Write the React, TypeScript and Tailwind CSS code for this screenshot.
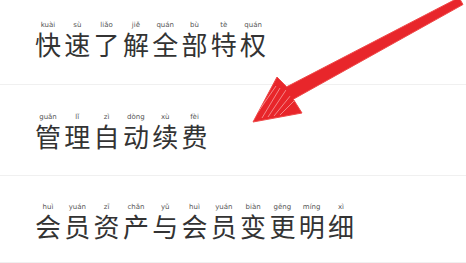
import React from "react";

type Char = { c: string; p: string };

const rows: { items: Char[]; cls: string }[] = [
  {
    cls: "h-[85px] pt-[21px]",
    items: [
      { c: "快", p: "kuài" },
      { c: "速", p: "sù" },
      { c: "了", p: "liǎo" },
      { c: "解", p: "jiě" },
      { c: "全", p: "quán" },
      { c: "部", p: "bù" },
      { c: "特", p: "tè" },
      { c: "权", p: "quán" },
    ],
  },
  {
    cls: "h-[91px] pt-[28px]",
    items: [
      { c: "管", p: "guǎn" },
      { c: "理", p: "lǐ" },
      { c: "自", p: "zì" },
      { c: "动", p: "dòng" },
      { c: "续", p: "xù" },
      { c: "费", p: "fèi" },
    ],
  },
  {
    cls: "h-[87px] pt-[27px]",
    items: [
      { c: "会", p: "huì" },
      { c: "员", p: "yuán" },
      { c: "资", p: "zī" },
      { c: "产", p: "chǎn" },
      { c: "与", p: "yǔ" },
      { c: "会", p: "huì" },
      { c: "员", p: "yuán" },
      { c: "变", p: "biàn" },
      { c: "更", p: "gēng" },
      { c: "明", p: "míng" },
      { c: "细", p: "xì" },
    ],
  },
];

const Arrow = () => (
  <svg
    className="absolute inset-0 pointer-events-none"
    width="466"
    height="263"
    viewBox="0 0 466 263"
  >
    <defs>
      <clipPath id="head">
        <polygon points="277,77 253,122 302,113" />
      </clipPath>
    </defs>
    <polygon
      points="459,-2.5 286.7,86.8 277,77 253,122 302,113 293.3,99.2 463,4.5"
      fill="#e8262b"
      stroke="#ef4a4a"
      strokeWidth="1"
      strokeLinejoin="round"
    />
    <g clipPath="url(#head)" stroke="#ffffff" strokeWidth="0.8" opacity="0.55">
      <line x1="262" y1="118" x2="280" y2="88" />
      <line x1="268" y1="117" x2="286" y2="90" />
      <line x1="274" y1="116" x2="291" y2="95" />
      <line x1="280" y1="115" x2="295" y2="100" />
      <line x1="258" y1="112" x2="276" y2="86" />
    </g>
  </svg>
);

export default function App() {
  return (
    <div className="relative w-[466px] h-[263px] overflow-hidden bg-white font-['Noto_Sans_CJK_SC','Noto_Sans',sans-serif]">
      {rows.map((row, i) => (
        <div
          key={i}
          className={`${row.cls} box-border pl-[35px] border-b border-[#f0f0f0]`}
        >
          <div className="flex gap-[3.3px]">
            {row.items.map((it, j) => (
              <div key={j} className="flex w-[26px] flex-col items-center">
                <span className="text-[7px] leading-[9px] text-[#555] font-['DejaVu_Sans',sans-serif]">
                  {it.p}
                </span>
                <span className="text-[26px] leading-[28px] text-[#333]">
                  {it.c}
                </span>
              </div>
            ))}
          </div>
        </div>
      ))}
      <Arrow />
    </div>
  );
}
